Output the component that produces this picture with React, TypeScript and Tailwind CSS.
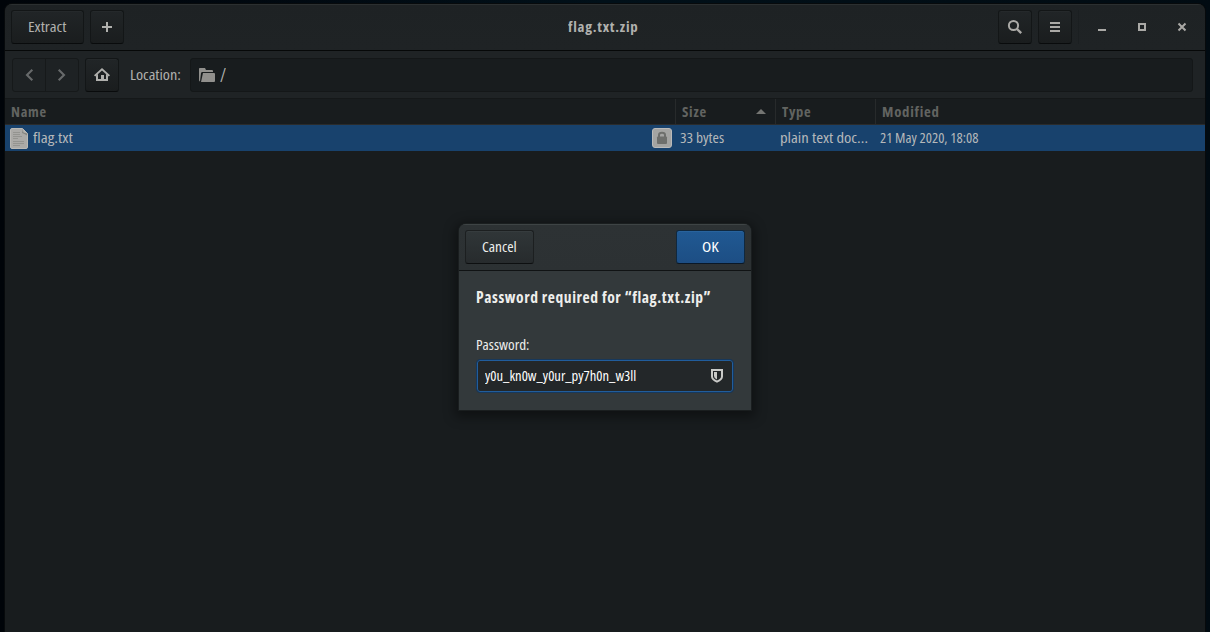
import { useLayoutEffect, useRef, useState } from "react";
import type { ReactNode } from "react";

type LabelProps = { text: string; width: number; className?: string };

/* Condensed label: the text is squeezed to the given advance width. */
function Label({ text, width, className = "" }: LabelProps) {
  const ref = useRef<HTMLSpanElement>(null);
  const [scale, setScale] = useState(1);
  useLayoutEffect(() => {
    if (ref.current) setScale(width / ref.current.offsetWidth);
  }, [text, width]);
  return (
    <span className={"block shrink-0 text-left leading-5 whitespace-nowrap " + className} style={{ width }}>
      <span ref={ref} className="inline-block origin-left" style={{ transform: `scaleX(${scale})` }}>
        {text}
      </span>
    </span>
  );
}

function ToolButton({ className = "", children }: { className?: string; children: ReactNode }) {
  return (
    <button
      className={
        "flex h-[34px] shrink-0 items-center justify-center rounded-[3px] border border-[#131617] border-b-[#090b0c] bg-linear-to-b from-[#212527] to-[#1a1d1e] shadow-[inset_0_1px_0_#25292b] " +
        className
      }
    >
      {children}
    </button>
  );
}

function PlusIcon() {
  return (
    <svg width="16" height="16" shapeRendering="crispEdges" fill="#b0b0ad">
      <path d="M7 3h2v4h4v2H9v4H7V9H3V7h4z" />
    </svg>
  );
}

function Chevron({ right = false }: { right?: boolean }) {
  return (
    <svg width="16" height="16" fill="none" stroke="#676a6b" strokeWidth="2.1">
      <path d={right ? "M4.7 2.7 10 8 4.7 13.3" : "M11.3 2.7 6 8 11.3 13.3"} />
    </svg>
  );
}

function HomeIcon() {
  return (
    <svg width="16" height="16" fill="#b0b0ad">
      <path d="M8 1 16 8.3 14.8 9.6 8 3.5 1.2 9.6 0 8.3z" />
      <path d="M2 8.5 4 6.7V12h3V8h3v4h2V6.7l2 1.8V14H2z" />
    </svg>
  );
}

function FolderIcon() {
  return (
    <svg width="16" height="14" fill="#91908d">
      <path d="M0 .8Q0 0 .8 0H6L7 2h6q1 0 1 1v1H3.5Q2.2 4 2 5.2L1 13.5Q0 13.3 0 12z" />
      <path d="M4 5h11q1 0 1 1v7q0 1-1 1H2z" />
    </svg>
  );
}

function SearchIcon() {
  return (
    <svg width="16" height="16" fill="none" stroke="#aaa9a6">
      <circle cx="6.5" cy="6.5" r="4.6" strokeWidth="2" />
      <path d="m10 10 4.2 4.2" strokeWidth="2.4" />
    </svg>
  );
}

function DocumentIcon() {
  return (
    <svg width="18" height="21" viewBox="0 0 18 21">
      <path d="M2 .5h10.5l5 5V19q0 1.5-1.5 1.5H2Q.5 20.5 .5 19V2Q.5 .5 2 .5z" fill="#abaaa7" stroke="#bab9b5" />
      <path d="M12.5 .8Q12.8 5.2 17.2 5.5L17 7.5Q14.5 5.5 12 5 12.8 3 12.5 .8z" fill="#858580" />
      <path d="M12.8 .8Q14 2.5 13.5 4.5 15.5 4.2 17.2 5.5z" fill="#b5b4b0" />
      <path d="M3 4.5h7M3 6.5h7M3 8.5h9M3 10.5h5M3 13.5h11M3 15.5h11M3 17.5h7" stroke="#949490" strokeWidth="1" />
    </svg>
  );
}

function LockBadge() {
  return (
    <svg width="20" height="20" viewBox="0 0 20 20">
      <rect x=".5" y=".5" width="19" height="19" rx="2.5" fill="#a4a4a2" stroke="#bababa" />
      <path d="M7 9V7q0-2.2 3-2.2T13 7v2" fill="none" stroke="#6e6f6c" strokeWidth="2" />
      <rect x="5" y="8.500" width="10" height="7.500" rx="1" fill="#6e6f6c" />
    </svg>
  );
}

function ShieldIcon() {
  return (
    <svg width="12" height="14" viewBox="0 0 12 14">
      <path d="M1 1h10v6.5q0 3-5 5.2-5-2.2-5-5.2z" fill="none" stroke="#c9cac8" strokeWidth="2" />
      <path d="M3 3h3v7.5Q3 9 3 7z" fill="#c9cac8" />
      <path d="M2.5 2.500h3.500M2.500 2.500V8" fill="none" stroke="#232729" strokeWidth=".7" />
    </svg>
  );
}

export default function App() {
  return (
    <div className="relative h-[632px] w-[1210px] overflow-hidden bg-[#010810] bg-linear-to-r from-[#000409] via-[#011019] to-[#010b12] pt-1 pl-[5px] font-['Open_Sans','Noto_Sans',sans-serif] text-[14px] text-[#b1b1ae] [font-stretch:75%]">
      <main className="flex h-[628px] w-[1200px] flex-col overflow-hidden rounded-t-[7px] bg-[#181c1e] shadow-[0_0_0_1px_#070a0c]">
        <header className="flex h-[47px] shrink-0 items-start border-t border-b border-t-[#2b2f30] border-b-[#060808] bg-linear-to-b from-[#1e2224] to-[#1f2325] pt-[5px] pl-1.5">
          <ToolButton className="w-[73px]">
            <Label text="Extract" width={39} />
          </ToolButton>
          <ToolButton className="ml-1.5 w-[34px]">
            <PlusIcon />
          </ToolButton>
          <div className="ml-[444px] pt-[7px]">
            <Label text="flag.txt.zip" width={70} className="font-bold tracking-[0.7px]" />
          </div>
          <ToolButton className="ml-[360px] w-[34px]">
            <SearchIcon />
          </ToolButton>
          <ToolButton className="ml-1.5 w-[34px]">
            <svg width="16" height="16" fill="#aaa9a6" shapeRendering="crispEdges">
              <path d="M3 3h10v2H3zM3 7h10v2H3zM3 11h10v2H3z" />
            </svg>
          </ToolButton>
          <div className="ml-1.5 h-[34px] w-px bg-[#1b1f21]" />
          <div className="flex h-[34px] items-center gap-6 pl-[15px]">
            <svg width="16" height="16" fill="#aaa9a6" shapeRendering="crispEdges">
              <path d="M4 10h8v2H4z" />
            </svg>
            <svg width="16" height="16" fill="none" stroke="#aaa9a6" strokeWidth="2" shapeRendering="crispEdges">
              <path d="M5 5h6v6H5z" />
            </svg>
            <svg width="16" height="16" fill="none" stroke="#aaa9a6" strokeWidth="2">
              <path d="m4.5 4.5 7 7m0-7-7 7" />
            </svg>
          </div>
        </header>

        <nav className="flex h-[48px] shrink-0 items-center border-b border-[#151819] bg-[#1f2325] pl-[7px]">
          <div className="flex h-[34px] w-[67px] items-center rounded-[3px] border border-[#16191a] bg-[#1e2224]">
            <div className="flex h-full w-[33px] items-center justify-center border-r border-[#16191a]">
              <Chevron />
            </div>
            <div className="flex h-full w-[32px] items-center justify-center">
              <Chevron right />
            </div>
          </div>
          <ToolButton className="ml-1.5 w-[34px]">
            <HomeIcon />
          </ToolButton>
          <Label text="Location:" width={51} className="ml-[11px]" />
          <div className="ml-[9px] flex h-[34px] w-[1003px] items-center rounded-[3px] border border-[#141718] bg-[#181c1e] pl-2">
            <FolderIcon />
            <Label text="/" width={6} className="ml-[5px] text-[19px]" />
          </div>
        </nav>

        <div className="flex h-[26px] shrink-0 border-b border-[#2a2b2b] bg-[#181c1e] font-bold tracking-[0.7px] text-[#626461]">
          <div className="flex w-[671px] items-center border-r border-[#272a2b] pl-1.5">
            <Label text="Name" width={36} />
          </div>
          <div className="flex w-[100px] items-center justify-between border-r border-[#272a2b] pr-[9px] pl-1.5">
            <Label text="Size" width={25} />
            <svg width="10" height="5" fill="#747572">
              <path d="M0 5 5 0l5 5z" />
            </svg>
          </div>
          <div className="flex w-[100px] items-center border-r border-[#272a2b] pl-1.5">
            <Label text="Type" width={29} />
          </div>
          <div className="flex items-center pl-1.5">
            <Label text="Modified" width={58} />
          </div>
        </div>

        <div className="flex h-[26px] shrink-0 items-center bg-[#18426d] pl-[5px] text-[#b5b8ba]">
          <DocumentIcon />
          <Label text="flag.txt" width={40} className="ml-[5px]" />
          <div className="ml-[579px]">
            <LockBadge />
          </div>
          <Label text="33 bytes" width={44} className="ml-2" />
          <Label text="plain text doc…" width={88} className="ml-14" />
          <Label text="21 May 2020, 18:08" width={98} className="ml-3" />
        </div>
      </main>

      <section
        role="dialog"
        className="absolute top-[224px] left-[459px] flex h-[186px] w-[292px] flex-col overflow-hidden rounded-t-[7px] bg-[#33393b] text-[#eeeeec] shadow-[0_0_0_1px_#1a1e1f,0_3px_12px_4px_rgba(0,0,0,0.4)]"
      >
        <div className="flex h-[47px] shrink-0 items-start justify-between border-t border-b border-t-[#3e4445] border-b-[#101314] bg-linear-to-b from-[#2d3234] to-[#2c3133] px-1.5 pt-[5px]">
          <button className="flex h-[34px] w-[69px] items-center justify-center rounded-[3px] border border-[#1c1f20] border-b-[#0d0f10] bg-linear-to-b from-[#303638] to-[#272b2d] shadow-[inset_0_1px_0_#363c3e]">
            <Label text="Cancel" width={35} />
          </button>
          <button className="flex h-[34px] w-[69px] items-center justify-center rounded-[3px] border border-[#10283e] border-b-[#0a1827] bg-linear-to-b from-[#205993] to-[#1d4e84] text-white shadow-[inset_0_1px_0_#28639d]">
            <Label text="OK" width={17} />
          </button>
        </div>
        <div className="flex flex-col px-[17px] pt-4">
          <Label text="Password required for “flag.txt.zip”" width={235} className="text-[16px] font-bold tracking-[0.6px]" />
          <Label text="Password:" width={54} className="mt-7" />
          <div className="mt-[4px] flex h-[34px] w-[258px] items-center justify-between rounded-[4px] border border-[#17385b] bg-[#232729] pr-[10px] pl-2 text-white shadow-[inset_0_0_0_1px_#215d9c]">
            <Label text="y0u_kn0w_y0ur_py7h0n_w3ll" width={151} />
            <ShieldIcon />
          </div>
        </div>
      </section>
    </div>
  );
}
